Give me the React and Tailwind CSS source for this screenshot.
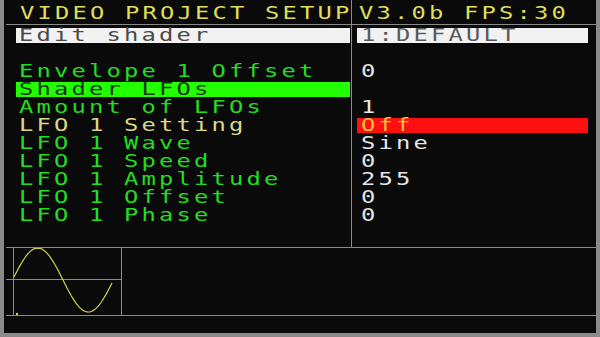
const rows = [
  { label: "Edit shader", value: "1:DEFAULT", box: true },
  { label: "", value: "" },
  { label: "Envelope 1 Offset", value: "0" },
  { label: "Shader LFOs", value: "", active: true },
  { label: "Amount of LFOs", value: "1" },
  { label: "LFO 1 Setting", value: "Off", selected: true },
  { label: "LFO 1 Wave", value: "Sine" },
  { label: "LFO 1 Speed", value: "0" },
  { label: "LFO 1 Amplitude", value: "255" },
  { label: "LFO 1 Offset", value: "0" },
  { label: "LFO 1 Phase", value: "0" },
];

const Txt = ({ children, className = "" }) => (
  <span
    className={`inline-block origin-left scale-x-[1.4] whitespace-pre tracking-[2.27px] ${className}`}
  >
    {children}
  </span>
);

const sinePoints = () => {
  const pts = [];
  for (let x = 8; x <= 106; x += 1) {
    const y = 32 - 32 * Math.sin(((x - 6.5) / 101) * Math.PI * 2);
    pts.push(`${x},${Math.max(0.5, Math.min(65.5, y)).toFixed(1)}`);
  }
  return pts.join(" ");
};

const LabelRow = ({ row }) => {
  let bar = "";
  let color = "text-[#22dd22]";
  if (row.box) {
    bar = "bg-[#f2f2f2]";
    color = "text-[#4a4a4a]";
  } else if (row.active) {
    bar = "bg-[#22ff00]";
    color = "text-[#163616]";
  } else if (row.selected) {
    color = "text-[#d8d88c]";
  }
  return (
    <div className="h-[18px] pt-px">
      <div className={`ml-[12px] mr-px h-[15px] pl-[3px] leading-[15px] ${bar} ${color}`}>
        <Txt>{row.label}</Txt>
      </div>
    </div>
  );
};

const ValueRow = ({ row }) => {
  let bar = "";
  let color = "text-[#e6e6e6]";
  if (row.box) {
    bar = "bg-[#f2f2f2]";
    color = "text-[#5a5a5a]";
  } else if (row.selected) {
    bar = "bg-[#ff1010]";
    color = "text-[#f4c23c]";
  }
  return (
    <div className="h-[18px] pt-px">
      <div className={`ml-[5px] mr-[8px] h-[15px] pl-[4px] leading-[15px] ${bar} ${color}`}>
        <Txt>{row.value}</Txt>
      </div>
    </div>
  );
};

export default function App() {
  return (
    <div className="h-[337px] w-[600px] overflow-hidden bg-[#8a8a8a] px-[4px] pb-[4px] font-['DejaVu_Sans_Mono',monospace] text-[17px]">
      <div className="flex h-full flex-col bg-[#0a0a0a]">
        <div className="flex h-[247px]">
          <div className="w-[348px] border-r border-[#8a8a8a]">
            <div className="ml-[2px] h-[25px] border-b border-[#8a8a8a] pl-[14px] pt-[2px] leading-[22px] text-[#dede5a]">
              <Txt>VIDEO PROJECT SETUP</Txt>
            </div>
            <div className="mt-[2px]">
              {rows.map((r, i) => (
                <LabelRow key={i} row={r} />
              ))}
            </div>
          </div>
          <div className="flex-1">
            <div className="h-[25px] border-b border-[#8a8a8a] pl-[7px] pt-[2px] leading-[22px] text-[#dede5a]">
              <Txt>V3.0b FPS:30</Txt>
            </div>
            <div className="mt-[2px]">
              {rows.map((r, i) => (
                <ValueRow key={i} row={r} />
              ))}
            </div>
          </div>
        </div>
        <div className="ml-[2px] border-y border-[#8a8a8a]">
          <div className="flex h-[67px]">
            <div className="w-[116px] border-r border-[#8a8a8a]">
              <svg width="115" height="67" viewBox="0 0 115 67">
                <line x1="7.5" y1="0" x2="7.5" y2="67" stroke="#8a8a8a" strokeWidth="1" />
                <line x1="0" y1="31.5" x2="115" y2="31.5" stroke="#8a8a8a" strokeWidth="1" />
                <polyline
                  points={sinePoints()}
                  fill="none"
                  stroke="#d2d246"
                  strokeWidth="1.2"
                />
                <rect x="10" y="65" width="2" height="2" fill="#d2d246" />
              </svg>
            </div>
          </div>
        </div>
        <div className="h-[17px]" />
      </div>
    </div>
  );
}
